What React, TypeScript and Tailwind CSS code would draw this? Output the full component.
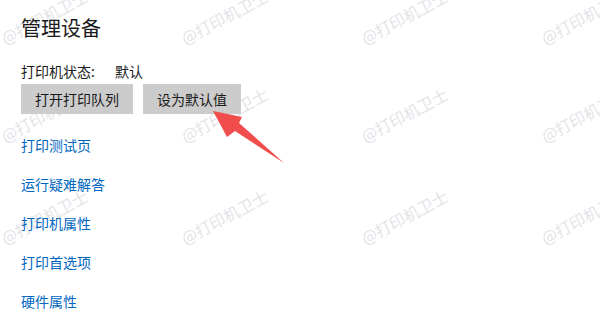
import React from "react";

const FONT = { fontFamily: '"Noto Sans CJK SC", "Microsoft YaHei", sans-serif' };

const marks: { x: number; y: number }[] = [];
[46, 144, 246].forEach((y) => {
  [6, 186, 366, 546].forEach((x) => marks.push({ x, y }));
});

export default function App() {
  return (
    <div className="relative w-[600px] h-[320px] overflow-hidden bg-white text-[#1a1a1a]" style={FONT}>
      {marks.map((m, i) => (
        <span
          key={i}
          className="pointer-events-none absolute z-0 whitespace-nowrap text-[16px] leading-[16px] text-[#e3e4e8] origin-bottom-left -rotate-[28deg]"
          style={{ left: m.x, top: m.y - 16 }}
        >
          @打印机卫士
        </span>
      ))}

      <div className="relative z-10 flex flex-col pl-[21px] pt-[14px]">
        <h1 className="text-[20px] leading-[28px] font-normal">管理设备</h1>
        <div className="mt-[19px] flex text-[14px] leading-[20px]">
          <span className="w-[94px]">打印机状态:</span>
          <span>默认</span>
        </div>
        <div className="mt-[3px] flex gap-[10px]">
          <button className="h-[30px] w-[112px] bg-[#cccccc] text-[14px] leading-[20px]">打开打印队列</button>
          <button className="h-[30px] w-[98px] bg-[#cccccc] text-[14px] leading-[20px]">设为默认值</button>
        </div>
        <div className="mt-[21px] flex flex-col items-start gap-[19px] text-[14px] leading-[20px] text-[#0067c0]">
          <a>打印测试页</a>
          <a>运行疑难解答</a>
          <a>打印机属性</a>
          <a>打印首选项</a>
          <a>硬件属性</a>
        </div>
      </div>

      <svg className="pointer-events-none absolute left-0 top-0 z-20" width="600" height="320" viewBox="0 0 600 320">
        <polygon
          points="213,111 242,117 239,123 284,163 235,131 227,137"
          fill="#f24d4d"
        />
      </svg>
    </div>
  );
}
